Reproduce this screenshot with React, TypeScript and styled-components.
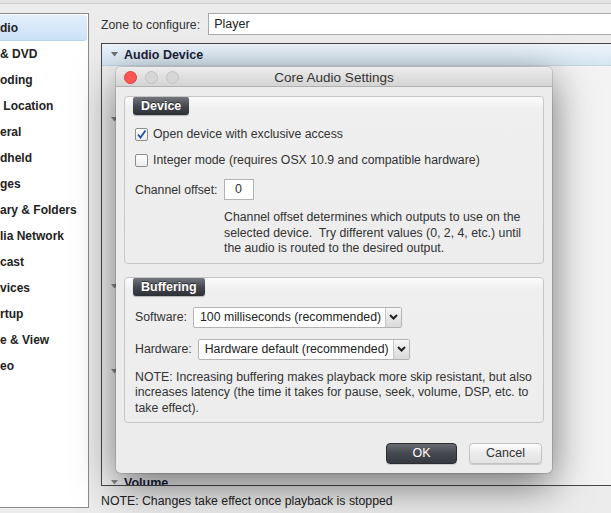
import React from 'react';
import styled, { createGlobalStyle } from 'styled-components';

const GlobalStyle = createGlobalStyle`
  html, body {
    margin: 0;
    padding: 0;
  }
  body {
    width: 611px;
    height: 513px;
    overflow: hidden;
    background: #ececec;
    font-family: "Liberation Sans", Arial, sans-serif;
    font-size: 12.3px;
    color: #333;
  }
`;

const Page = styled.div`
  position: relative;
  width: 611px;
  height: 513px;
  overflow: hidden;
`;

const TopEdge = styled.div`
  height: 3px;
  background: #e4e4e4;
  border-bottom: 1px solid #cdcdcd;
`;

const Body = styled.div`
  display: flex;
  align-items: flex-start;
`;

const Sidebar = styled.ul`
  list-style: none;
  margin: 9px 0 0;
  padding: 1px 0 0;
  width: 88px;
  height: 492px;
  flex-shrink: 0;
  background: #fff;
  border: 1px solid #8a8a8a;
  border-left: none;
  overflow: hidden;
`;

const SideItem = styled.li<{ $selected?: boolean }>`
  height: 26px;
  line-height: 26px;
  margin-right: 1px;
  font-weight: bold;
  font-size: 12px;
  color: #222;
  white-space: pre;
  border-radius: 0 4px 4px 0;
  background: ${p => (p.$selected ? 'linear-gradient(#e3effb, #cbe1f5)' : 'transparent')};
  box-shadow: ${p => (p.$selected ? 'inset 0 -1px 0 #b9d3ea' : 'none')};
`;

const Main = styled.div`
  flex: 1;
  padding: 9px 0 0 12px;
  display: flex;
  flex-direction: column;
  min-width: 0;
`;

const ZoneRow = styled.div`
  display: flex;
  align-items: center;
  gap: 8px;
  height: 22px;
`;

const ZoneLabel = styled.span`
  white-space: nowrap;
  padding-top: 1px;
`;

const ZoneInput = styled.div`
  flex: 1;
  height: 20px;
  line-height: 21px;
  margin-right: -20px;
  padding-left: 5px;
  background: #fff;
  border: 1px solid #a9a9a9;
  font-size: 12.5px;
  color: #222;
`;

const Panel = styled.div`
  margin-top: 8px;
  margin-right: -20px;
  height: 441px;
  background: #f3f3f3;
  border: 1px solid #474747;
  border-right: none;
  overflow: hidden;
  display: flex;
  flex-direction: column;
`;

const SectionRow = styled.div<{ $open?: boolean; $offset?: number }>`
  flex-shrink: 0;
  display: flex;
  align-items: center;
  gap: 6px;
  height: 21px;
  margin-top: ${p => p.$offset ?? 0}px;
  padding-left: 9px;
  font-weight: bold;
  font-size: 12.5px;
  color: #1c1f3a;
  background: ${p => (p.$open ? 'linear-gradient(#edf4fb, #d5e6f1)' : 'transparent')};
  border-bottom: 1px solid ${p => (p.$open ? '#c3d5e2' : 'transparent')};
`;

const Note = styled.div`
  margin-top: 8px;
  line-height: 14px;
  color: #222;
`;

const Dialog = styled.div`
  position: absolute;
  left: 116px;
  top: 67px;
  width: 436px;
  height: 406px;
  background: #ececec;
  border-radius: 5px;
  box-shadow: 0 0 0 1px rgba(0, 0, 0, 0.12), 0 12px 42px rgba(0, 0, 0, 0.55);
  display: flex;
  flex-direction: column;
  overflow: hidden;
`;

const TitleBar = styled.div`
  position: relative;
  height: 20px;
  flex-shrink: 0;
  display: flex;
  align-items: center;
  justify-content: center;
  padding-top: 1px;
  box-sizing: border-box;
  background: linear-gradient(#ececec, #d4d4d4);
  border-bottom: 1px solid #b1b1b1;
  font-size: 13.5px;
  color: #333;
`;

const Lights = styled.div`
  position: absolute;
  left: 8px;
  top: 4px;
  display: flex;
  gap: 8px;
`;

const Light = styled.span<{ $color: string; $edge: string }>`
  width: 11px;
  height: 11px;
  border-radius: 50%;
  background: ${p => p.$color};
  border: 0.5px solid ${p => p.$edge};
`;

const DialogBody = styled.div`
  flex: 1;
  padding: 9px 8px 0;
  display: flex;
  flex-direction: column;
`;

const GroupBox = styled.div<{ $gap?: number }>`
  margin-top: ${p => p.$gap ?? 0}px;
  padding: 0 10px 6px;
  border: 1px solid #c6c6c6;
  border-radius: 4px;
  background: linear-gradient(#fbfbfb 0, #efefef 12px, #ededed 100%);
  display: flex;
  flex-direction: column;
  align-items: flex-start;
`;

const GroupTab = styled.div`
  margin-left: -2px;
  height: 18px;
  line-height: 18px;
  padding: 0 8px;
  border-radius: 2px 2px 3px 3px;
  background: linear-gradient(#74777d, #45484e 50%, #2c2f34);
  box-shadow: 0 1px 1px rgba(0, 0, 0, 0.25);
  color: #fff;
  font-weight: bold;
  font-size: 12.5px;
  text-shadow: 0 -1px 0 rgba(0, 0, 0, 0.5);
`;

const CheckRow = styled.label<{ $gap: number }>`
  margin-top: ${p => p.$gap}px;
  height: 16px;
  display: flex;
  align-items: center;
  gap: 5px;
`;

const Box = styled.span`
  width: 11px;
  height: 11px;
  border: 1px solid #8e8e8e;
  border-radius: 2px;
  background: linear-gradient(#ffffff, #ececec);
  display: flex;
  align-items: center;
  justify-content: center;
`;

const FieldRow = styled.div<{ $gap: number }>`
  margin-top: ${p => p.$gap}px;
  display: flex;
  align-items: center;
  gap: 6px;
`;

const NumberBox = styled.div`
  width: 28px;
  height: 19px;
  line-height: 19px;
  text-align: center;
  background: #fff;
  border: 1px solid #b3b3b3;
  font-size: 12.5px;
`;

const Paragraph = styled.p<{ $indent?: number }>`
  margin: 10px 0 0 ${p => p.$indent ?? 0}px;
  line-height: 15.5px;
`;

const Select = styled.div<{ $width: number }>`
  width: ${p => p.$width}px;
  height: 19px;
  display: flex;
  background: #fff;
  border: 1px solid #b3b3b3;
  border-radius: 2px;
`;

const SelectText = styled.span`
  flex: 1;
  padding-left: 6px;
  line-height: 19px;
  font-size: 12.3px;
  color: #222;
  white-space: nowrap;
  overflow: hidden;
`;

const SelectArrow = styled.span`
  width: 15px;
  flex-shrink: 0;
  display: flex;
  align-items: center;
  justify-content: center;
  border-left: 1px solid #c4c4c4;
  background: linear-gradient(#f6f6f6, #dadada);
`;

const Footer = styled.div`
  margin-top: 20px;
  padding-right: 2px;
  display: flex;
  justify-content: flex-end;
  gap: 12px;
`;

const Button = styled.div<{ $primary?: boolean }>`
  width: ${p => (p.$primary ? 69 : 71)}px;
  height: 19px;
  line-height: 19px;
  text-align: center;
  border-radius: 4px;
  font-size: 12.5px;
  border: 1px solid ${p => (p.$primary ? '#2a2c30' : '#c2c2c2')};
  color: ${p => (p.$primary ? '#fff' : '#333')};
  background: ${p =>
    p.$primary ? 'linear-gradient(#686b71, #45484e 50%, #363940)' : 'linear-gradient(#fdfdfd, #ebebeb 50%, #e2e2e2)'};
  box-shadow: 0 1px 1px rgba(0, 0, 0, 0.15);
`;

const Triangle = ({ color = '#707070' }: { color?: string }) => (
  <svg width="7" height="5" viewBox="0 0 7 5">
    <polygon points="0,0 7,0 3.5,4.5" fill={color} />
  </svg>
);

const Chevron = () => (
  <svg width="9" height="6" viewBox="0 0 9 6">
    <polyline points="1,1 4.5,4.5 8,1" fill="none" stroke="#222" strokeWidth="2" />
  </svg>
);

const Check = () => (
  <svg width="11" height="11" viewBox="0 0 11 11">
    <polyline points="2,5.5 4.5,8.5 9.5,1.5" fill="none" stroke="#1e4fa6" strokeWidth="1.8" />
  </svg>
);

const sideItems = [
  'dio', '& DVD', 'oding', ' Location', 'eral', 'dheld', 'ges',
  'ary & Folders', 'lia Network', 'cast', 'vices', 'rtup', 'e & View', 'eo',
];

// collapsed sections behind the dialog: only their disclosure triangles show
const sections = [
  { name: '', offset: 43 },
  { name: '', offset: 145 },
  { name: '', offset: 63 },
  { name: 'Volume', offset: 89 },
];

export default function App() {
  return (
    <>
      <GlobalStyle />
      <Page>
        <TopEdge />
        <Body>
          <Sidebar>
            {sideItems.map((item, i) => (
              <SideItem key={item} $selected={i === 0}>{item}</SideItem>
            ))}
          </Sidebar>
          <Main>
            <ZoneRow>
              <ZoneLabel>Zone to configure:</ZoneLabel>
              <ZoneInput>Player</ZoneInput>
            </ZoneRow>
            <Panel>
              <SectionRow $open>
                <Triangle />
                Audio Device
              </SectionRow>
              {sections.map((s, i) => (
                <SectionRow key={i} $offset={s.offset}>
                  <Triangle color="#8a8a8a" />
                  {s.name}
                </SectionRow>
              ))}
            </Panel>
            <Note>NOTE: Changes take effect once playback is stopped</Note>
          </Main>
        </Body>

        <Dialog>
          <TitleBar>
            <Lights>
              <Light $color="#fc5753" $edge="#df3d38" />
              <Light $color="#d6d6d6" $edge="#c0c0c0" />
              <Light $color="#d6d6d6" $edge="#c0c0c0" />
            </Lights>
            Core Audio Settings
          </TitleBar>
          <DialogBody>
            <GroupBox>
              <GroupTab>Device</GroupTab>
              <CheckRow $gap={11}>
                <Box><Check /></Box>
                Open device with exclusive access
              </CheckRow>
              <CheckRow $gap={10}>
                <Box />
                Integer mode (requires OSX 10.9 and compatible hardware)
              </CheckRow>
              <FieldRow $gap={11}>
                Channel offset:
                <NumberBox>0</NumberBox>
              </FieldRow>
              <Paragraph $indent={89}>
                Channel offset determines which outputs to use on the<br />
                selected device.&nbsp; Try different values (0, 2, 4, etc.) until<br />
                the audio is routed to the desired output.
              </Paragraph>
            </GroupBox>

            <GroupBox $gap={13}>
              <GroupTab>Buffering</GroupTab>
              <FieldRow $gap={11}>
                Software:
                <Select $width={207}>
                  <SelectText>100 milliseconds (recommended)</SelectText>
                  <SelectArrow><Chevron /></SelectArrow>
                </Select>
              </FieldRow>
              <FieldRow $gap={11}>
                Hardware:
                <Select $width={210}>
                  <SelectText>Hardware default (recommended)</SelectText>
                  <SelectArrow><Chevron /></SelectArrow>
                </Select>
              </FieldRow>
              <Paragraph>
                NOTE: Increasing buffering makes playback more skip resistant, but also<br />
                increases latency (the time it takes for pause, seek, volume, DSP, etc. to<br />
                take effect).
              </Paragraph>
            </GroupBox>

            <Footer>
              <Button $primary>OK</Button>
              <Button>Cancel</Button>
            </Footer>
          </DialogBody>
        </Dialog>
      </Page>
    </>
  );
}
